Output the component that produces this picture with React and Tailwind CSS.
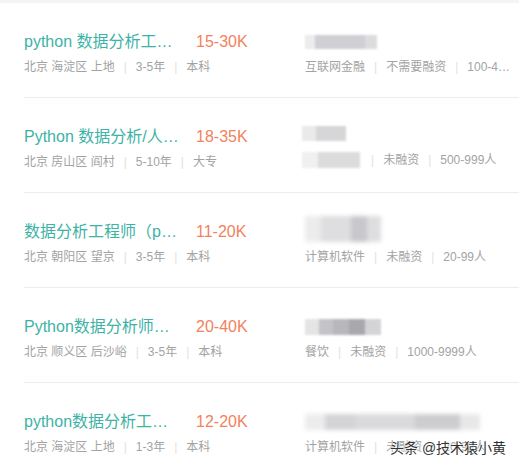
import React from "react";

const rows = [
  {
    title: "python 数据分析工…",
    salary: "15-30K",
    meta: ["北京 海淀区 上地", "3-5年", "本科"],
    right: ["互联网金融", "不需要融资", "100-4…"],
    blur: "r1",
  },
  {
    title: "Python 数据分析/人…",
    salary: "18-35K",
    meta: ["北京 房山区 阎村", "5-10年", "大专"],
    right: ["未融资", "500-999人"],
    blur: "r2",
  },
  {
    title: "数据分析工程师（p…",
    salary: "11-20K",
    meta: ["北京 朝阳区 望京", "3-5年", "本科"],
    right: ["计算机软件", "未融资", "20-99人"],
    blur: "r3",
  },
  {
    title: "Python数据分析师…",
    salary: "20-40K",
    meta: ["北京 顺义区 后沙峪", "3-5年", "本科"],
    right: ["餐饮", "未融资", "1000-9999人"],
    blur: "r4",
  },
  {
    title: "python数据分析工…",
    salary: "12-20K",
    meta: ["北京 海淀区 上地", "1-3年", "本科"],
    right: ["计算机软件", "未融资", "20-99人"],
    blur: "r5",
  },
];

function Meta({ items, lead }) {
  return (
    <div className="flex items-center text-[12px] leading-[16px] text-[#a3a3a3]">
      {lead}
      {items.map((t, i) => (
        <React.Fragment key={i}>
          {(i > 0 || lead) && <span className="mx-[9px] text-[#e2e2e2]">|</span>}
          <span>{t}</span>
        </React.Fragment>
      ))}
    </div>
  );
}

function Blur({ kind }) {
  if (kind === "r1")
    return (
      <div className="flex h-[14px] w-[72px] blur-[1px]">
        <div className="w-[10px] bg-[#ececec]" />
        <div className="w-[50px] bg-[#cfcfd4]" />
        <div className="w-[12px] bg-[#dcdcdf]" />
      </div>
    );
  if (kind === "r3")
    return (
      <div className="flex h-[26px] w-[76px] blur-[2px] -mt-[6px]">
        <div className="w-[16px] bg-[#ececec]" />
        <div className="w-[30px] bg-[#dedee0]" />
        <div className="w-[16px] bg-[#c8c8cc]" />
        <div className="w-[14px] bg-[#dedee0]" />
      </div>
    );
  if (kind === "r4")
    return (
      <div className="flex h-[16px] w-[76px] blur-[1px]">
        <div className="w-[14px] bg-[#e4e4e4]" />
        <div className="w-[14px] bg-[#c4c4c8]" />
        <div className="w-[16px] bg-[#b8b8bc]" />
        <div className="w-[16px] bg-[#a9a9ad]" />
        <div className="w-[16px] bg-[#d4d4d6]" />
      </div>
    );
  if (kind === "r5")
    return (
      <div className="flex h-[16px] w-[175px] blur-[2px]">
        <div className="w-[20px] bg-[#ececec]" />
        <div className="w-[30px] bg-[#d4d4d6]" />
        <div className="w-[60px] bg-[#dadadc]" />
        <div className="w-[45px] bg-[#cdcdd0]" />
        <div className="w-[20px] bg-[#e8e8e8]" />
      </div>
    );
  return null;
}

export default function App() {
  return (
    <div
      className="relative w-[519px] h-[468px] bg-white overflow-hidden"
      style={{ fontFamily: '"Liberation Sans", "Noto Sans CJK SC", sans-serif' }}
    >
      <div className="h-[3px] bg-[#f4f4f4]" />
      {rows.map((r, i) => (
        <div key={i} className="ml-[24px] flex h-[95px] border-b border-[#ececec]">
          <div className="w-[281px] pt-[28px]">
            <div className="flex items-center h-[22px]">
              <span className="w-[172px] text-[16px] text-[#3db3a6] whitespace-nowrap overflow-hidden">
                {r.title}
              </span>
              <span className="text-[16px] text-[#f2825c]">{r.salary}</span>
            </div>
            <div className="mt-[6px]">
              <Meta items={r.meta} />
            </div>
          </div>
          <div className="pt-[28px]">
            {r.blur === "r2" ? (
              <>
                <div className="flex h-[15px] w-[44px] -ml-[3px] blur-[1px]">
                  <div className="w-[14px] bg-[#eaeaea]" />
                  <div className="w-[30px] bg-[#d6d6d8]" />
                </div>
                <div className="mt-[11px] flex items-center">
                  <div className="flex h-[16px] w-[58px] -ml-[3px] blur-[1px] mr-[2px]">
                    <div className="w-[16px] bg-[#f0f0f0]" />
                    <div className="w-[42px] bg-[#dcdcde]" />
                  </div>
                  <Meta items={r.right} lead={<span />} />
                </div>
              </>
            ) : (
              <>
                <div className="h-[22px] flex items-center">
                  <Blur kind={r.blur} />
                </div>
                <div className="mt-[6px]">
                  <Meta items={r.right} />
                </div>
              </>
            )}
          </div>
        </div>
      ))}
      <div
        className="absolute left-[390px] top-[439px] text-[14px] leading-[18px] text-[#333] whitespace-nowrap"
        style={{ textShadow: "0 0 2px #fff, 0 0 2px #fff" }}
      >
        头条 @技术猿小黄
      </div>
    </div>
  );
}
